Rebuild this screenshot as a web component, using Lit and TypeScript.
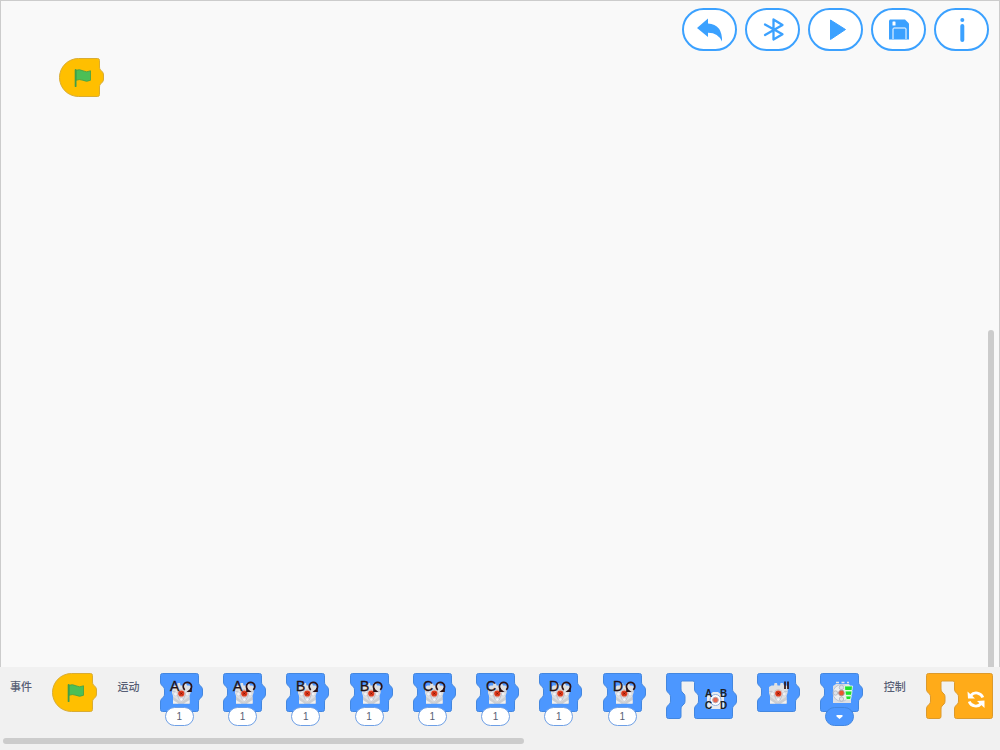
import { LitElement, html, svg, css, nothing } from "lit";
import { customElement, property } from "lit/decorators.js";

type BlockKind = "start" | "motor" | "motors" | "stop" | "power" | "forever";

const SHAPES: Record<string, { w: number; h: number; d: string }> = {
  start: {
    w: 45,
    h: 39,
    d: "M19.5 .5H38.5Q40.5 .5 40.5 2.5V9Q40.5 11 41.5 12L43.5 14Q44.5 15 44.5 17V21Q44.5 23 43.5 24L41.5 26Q40.5 27 40.5 29V36.5Q40.5 38.5 38.5 38.5H19.5A19 19 0 0 1 19.5 .5Z",
  },
  plain: {
    w: 43,
    h: 39,
    d: "M2.5 .5H36.5Q38.5 .5 38.5 2.5V9Q38.5 11 39.5 12L41.5 14Q42.5 15 42.5 17V21Q42.5 23 41.5 24L39.5 26Q38.5 27 38.5 29V36.5Q38.5 38.5 36.5 38.5H2.5Q.5 38.5 .5 36.5V29Q.5 27 1.5 26L3.5 24Q4.5 23 4.5 21V17Q4.5 15 3.5 14L1.5 12Q.5 11 .5 9V2.5Q.5 .5 2.5 .5Z",
  },
  wrap: {
    w: 71,
    h: 46,
    d: "M2.5 .5H64.5Q66.5 .5 66.5 2.5V16Q66.5 18 67.5 19L69.5 21Q70.5 22 70.5 24V28Q70.5 30 69.5 31L67.5 33Q66.5 34 66.5 36V43.5Q66.5 45.5 64.5 45.5H30.5Q28.5 45.5 28.5 43.5V36Q28.5 34 29.5 33L31.5 31Q32.5 30 32.5 28V24Q32.5 22 31.5 21L29.5 19Q28.5 18 28.5 16V9.5Q28.5 8 27 8H16.5Q15 8 15 9.5V16Q15 18 16 19L18 21Q19 22 19 24V28Q19 30 18 31L16 33Q15 34 15 36V43.5Q15 45.5 13 45.5H2.5Q.5 45.5 .5 43.5V36Q.5 34 1.5 33L3.5 31Q4.5 30 4.5 28V24Q4.5 22 3.5 21L1.5 19Q.5 18 .5 16V2.5Q.5 .5 2.5 .5Z",
  },
  wrapEnd: {
    w: 67,
    h: 46,
    d: "M2.5 .5H64.5Q66.5 .5 66.5 2.5V43.5Q66.5 45.5 64.5 45.5H30.5Q28.5 45.5 28.5 43.5V36Q28.5 34 29.5 33L31.5 31Q32.5 30 32.5 28V24Q32.5 22 31.5 21L29.5 19Q28.5 18 28.5 16V9.5Q28.5 8 27 8H16.5Q15 8 15 9.5V16Q15 18 16 19L18 21Q19 22 19 24V28Q19 30 18 31L16 33Q15 34 15 36V43.5Q15 45.5 13 45.5H2.5Q.5 45.5 .5 43.5V36Q.5 34 1.5 33L3.5 31Q4.5 30 4.5 28V24Q4.5 22 3.5 21L1.5 19Q.5 18 .5 16V2.5Q.5 .5 2.5 .5Z",
  },
};

const flag = svg`
  <path d="M16.800 12.300Q20.500 10.800 24 12.800Q27.500 14.800 31.500 12.800V22.300Q27.500 24.300 24 22.300Q20.500 20.800 16.800 22.300Z" fill="#4cbf56" stroke="#3f9f49" stroke-width=".8"/>
  <path d="M16.600 12V28.200" stroke="#3f9f49" stroke-width="1.800" stroke-linecap="round"/>`;

const motorBody = svg`
  <path d="M12 14L14.500 12.500H17L17.500 10H20L20.500 12.500H23L23.500 10H26L27 12.500H29.500L31 14L30.500 20L29.500 23V30.500H13V23L12 20Z" fill="#dfe0e2"/>
  <path d="M13 23.500L21 29.500L29.500 23.500V30.500H13Z" fill="#cdced1"/>
  <path d="M13 27L18.500 30.500H13ZM29.500 27L24 30.500H29.500Z" fill="#f0f0f0"/>
  <path d="M12.500 18.500Q15 17 16.500 20.500L19.500 27Q21.300 29.500 23 27L26 20.500Q27.500 17 30.500 18.500" fill="#eceef2" stroke="#b4b9c9" stroke-width=".8"/>
  <circle cx="15.500" cy="21" r="1.900" fill="#f2f2f4" stroke="#c0c4cf" stroke-width=".5"/>
  <circle cx="27.200" cy="21" r="1.900" fill="#f2f2f4" stroke="#c0c4cf" stroke-width=".5"/>
  <circle cx="21.300" cy="26.500" r="1.700" fill="#f6f6f8" stroke="#c0c4cf" stroke-width=".5"/>
  <circle cx="21.300" cy="20.500" r="4" fill="#e6dcdc" stroke="#b9a9ad" stroke-width=".5"/>
  <circle cx="21.300" cy="20.500" r="3.100" fill="#e03a1c"/>
  <path d="M20.300 19.500L22.300 21.500M22.300 19.500L20.300 21.500" stroke="#7a1408" stroke-width="1"/>`;

@customElement("code-block")
export class CodeBlock extends LitElement {
  @property() kind: BlockKind = "start";
  @property() port = "";
  @property({ type: Boolean }) reverse = false;
  @property() label = "";

  static styles = css`
    :host {
      display: flex;
      flex: none;
      flex-direction: column;
    }
    svg {
      display: block;
      overflow: visible;
    }
    .start { fill: #ffbf00; stroke: #d9ac33; }
    .motion { fill: #4c97ff; stroke: #4387e0; }
    .control { fill: #ffab19; stroke: #dc9a2c; }
    .port {
      font: 14px "Liberation Sans", sans-serif;
      fill: #241014;
      stroke: #241014;
      stroke-width: 0.3px;
    }
    .ports {
      font: bold 10px "Liberation Sans", sans-serif;
      fill: #1c2026;
    }
    .slot {
      box-sizing: border-box;
      width: 29px;
      height: 19px;
      margin: -5px 0 0 5px;
      padding: 0;
      border: 1px solid #6fa0e6;
      border-radius: 10px;
      position: relative;
      background: #fff;
      color: #575e75;
      font: 500 10px "Liberation Sans", sans-serif;
      text-align: center;
    }
    .menu {
      display: grid;
      place-items: center;
      border-color: #4387e0;
      background: #4c97ff;
    }
  `;

  private art() {
    switch (this.kind) {
      case "start":
        return flag;
      case "motor":
        return svg`${motorBody}
          <text class="port" x="10" y="18">${this.port}</text>
          <g transform=${this.reverse ? "translate(55 0) scale(-1 1)" : ""}>
            <path d="M24.800 16.800A4.200 4.200 0 1 1 30.500 16.300" fill="none" stroke="#2c1216" stroke-width="1.700"/>
            <path d="M31.800 14.500V19H26.500Z" fill="#2c1216"/>
          </g>`;
      case "motors":
        return svg`
          <path d="M41 21L45 22L47 19H52L54 22L58 21V36H41Z" fill="#e8eaee"/>
          <circle cx="49.500" cy="27" r="8" fill="#e8eaee"/>
          <circle cx="49.500" cy="27" r="5.500" fill="#fff" stroke="#8fb0e0"/>
          <circle cx="49.500" cy="27" r="2.800" fill="#e9664e" stroke="#bba4ad"/>
          <text class="ports" x="39" y="24">A</text>
          <text class="ports" x="54" y="24">B</text>
          <text class="ports" x="39" y="36">C</text>
          <text class="ports" x="54" y="36">D</text>`;
      case "stop":
        return svg`${motorBody}
          <path d="M28 8.500V16M31 8.500V16" stroke="#2c1216" stroke-width="1.700"/>`;
      case "power":
        return svg`
          <path d="M16 9.500H19M21.500 9.500H24.500M27 9.500H29" stroke="#e4e5e8" stroke-width="1.500"/>
          <path d="M13 13L16 11H29L31 14V30H13Z" fill="#dddfe3"/>
          <circle cx="21.300" cy="20" r="8.300" fill="#eeeff1" stroke="#aeb6c8" stroke-width=".7"/>
          <g fill="#dfe1e6" stroke="#a7adba" stroke-width=".7">
            <circle cx="21.500" cy="14.500" r="2.200"/><circle cx="15.500" cy="20" r="2.200"/>
            <circle cx="21.500" cy="26" r="2.200"/>
          </g>
          <circle cx="21.500" cy="20" r="2.800" fill="#e9562f" stroke="#ae8d8a"/>
          <g fill="#1fe22a" stroke="#f2fff2" stroke-width=".8">
            <path d="M24.500 13H32.500L32 17.500H24.800Z"/>
            <path d="M25 18H32L31.500 22.300H25.500Z"/>
            <path d="M25.700 23H31.300L30.500 26.500H26.300Z"/>
          </g>`;
      case "forever":
        return svg`
          <g fill="none" stroke="#fff" stroke-width="2.800">
            <path d="M44.800 22.500A7 7 0 0 1 56.800 24.500"/>
            <path d="M55.200 30.500A7 7 0 0 1 43.200 28.500"/>
          </g>
          <path d="M41.500 18.500L42 25.500H49ZM58.500 35V27.500L51 28Z" fill="#fff"/>`;
    }
  }

  render() {
    const shape =
      SHAPES[
        this.kind === "start" ? "start"
          : this.kind === "motors" ? "wrap"
          : this.kind === "forever" ? "wrapEnd"
          : "plain"
      ];
    const tone =
      this.kind === "start" ? "start" : this.kind === "forever" ? "control" : "motion";
    return html`
      <svg width=${shape.w} height=${shape.h} viewBox="0 0 ${shape.w} ${shape.h}" role="img" aria-label=${this.label}>
        <path class=${tone} d=${shape.d} />
        ${this.art()}
      </svg>
      ${this.kind === "motor"
        ? html`<input class="slot" type="text" inputmode="numeric" value="1" aria-label=${this.label} />`
        : nothing}
      ${this.kind === "power"
        ? html`<button class="slot menu" type="button" aria-label=${this.label}>
            <svg width="9" height="6" viewBox="0 0 9 6"><path d="M1.500 1H7.500V2.500L4.500 5L1.500 2.500Z" fill="#fff"/></svg>
          </button>`
        : nothing}
    `;
  }
}

const TOOLS = [
  {
    label: "撤销",
    icon: svg`<path d="M2 11L13 1.500V6.500Q27.500 7.500 27 24.500Q23 15.500 13 15.700V20Z" fill="#3ba1ff"/>`,
  },
  {
    label: "蓝牙",
    icon: svg`<path d="M7 7.500L24.500 17.200L15.500 22.500V2.500L24.500 8L7 18" fill="none" stroke="#3ba1ff" stroke-width="2.300" stroke-linejoin="round" stroke-linecap="round"/>`,
  },
  {
    label: "运行",
    icon: svg`<path d="M9.500 3L24.500 12.500L9.500 22.500Z" fill="#3ba1ff" stroke="#3ba1ff" stroke-linejoin="round"/>`,
  },
  {
    label: "保存",
    icon: svg`<path d="M6 2.500H21L25 6.500V22.500H5V3.500Z" fill="#3ba1ff"/>
      <rect x="8.500" y="4.500" width="3" height="4" rx=".5" fill="#fff"/>
      <path d="M9 22V12Q9 11 10 11H21Q22 11 22 12V22" fill="none" stroke="#fff"/>`,
  },
  {
    label: "信息",
    icon: svg`<circle cx="15.300" cy="3" r="2" fill="#3ba1ff"/>
      <path d="M15.300 9V23" stroke="#3ba1ff" stroke-width="4" stroke-linecap="round"/>`,
  },
];

@customElement("app-root")
export class AppRoot extends LitElement {
  static styles = css`
    :host {
      display: flex;
      flex-direction: column;
      height: 100vh;
      overflow: hidden;
      font-family: "Noto Sans CJK SC", "Liberation Sans", sans-serif;
    }
    .workspace {
      flex: 1;
      min-height: 0;
      box-sizing: border-box;
      display: flex;
      flex-direction: column;
      position: relative;
      border: 1px solid #ccc;
      border-bottom: 0;
      background: #f9f9f9;
    }
    .tools {
      display: flex;
      justify-content: flex-end;
      gap: 8px;
      padding: 7px 10px 0;
    }
    .tool {
      box-sizing: border-box;
      display: grid;
      place-items: center;
      width: 55px;
      height: 43px;
      padding: 0;
      border: 2px solid #3ba1ff;
      border-radius: 22px;
      background: #fff;
    }
    .placed {
      position: absolute;
      left: 58px;
      top: 57px;
    }
    .bar {
      position: absolute;
      border-radius: 3px;
      background: #ccc;
    }
    .vertical {
      right: 5px;
      top: 329px;
      bottom: 0;
      width: 6px;
      border-radius: 3px 3px 0 0;
    }
    .horizontal {
      left: 3px;
      bottom: 6px;
      width: 52.1%;
      height: 6px;
    }
    .palette {
      display: flex;
      align-items: flex-start;
      justify-content: space-between;
      gap: 20px;
      position: relative;
      padding: 6px 7px 24px 10px;
      background: #f1f1f1;
    }
    .category {
      flex: none;
      margin: 0;
      padding-top: 5px;
      color: #575e75;
      font-size: 11px;
      line-height: 16px;
      font-weight: 500;
    }
  `;

  render() {
    return html`
      <main class="workspace">
        <nav class="tools">
          ${TOOLS.map(
            (tool) => html`<button class="tool" type="button" aria-label=${tool.label}>
              <svg width="30" height="26" viewBox="0 0 30 26">${tool.icon}</svg>
            </button>`
          )}
        </nav>
        <code-block class="placed" kind="start" label="开始"></code-block>
        <div class="bar vertical"></div>
      </main>
      <section class="palette">
        <h2 class="category">事件</h2>
        <code-block kind="start" label="开始"></code-block>
        <h2 class="category">运动</h2>
        ${["A", "B", "C", "D"].map((port) =>
          [false, true].map(
            (reverse) => html`<code-block kind="motor" port=${port} ?reverse=${reverse}
              label="电机 ${port}"></code-block>`
          )
        )}
        <code-block kind="motors" label="多个电机"></code-block>
        <code-block kind="stop" label="停止"></code-block>
        <code-block kind="power" label="功率"></code-block>
        <h2 class="category">控制</h2>
        <code-block kind="forever" label="循环"></code-block>
        <div class="bar horizontal"></div>
      </section>
    `;
  }
}
